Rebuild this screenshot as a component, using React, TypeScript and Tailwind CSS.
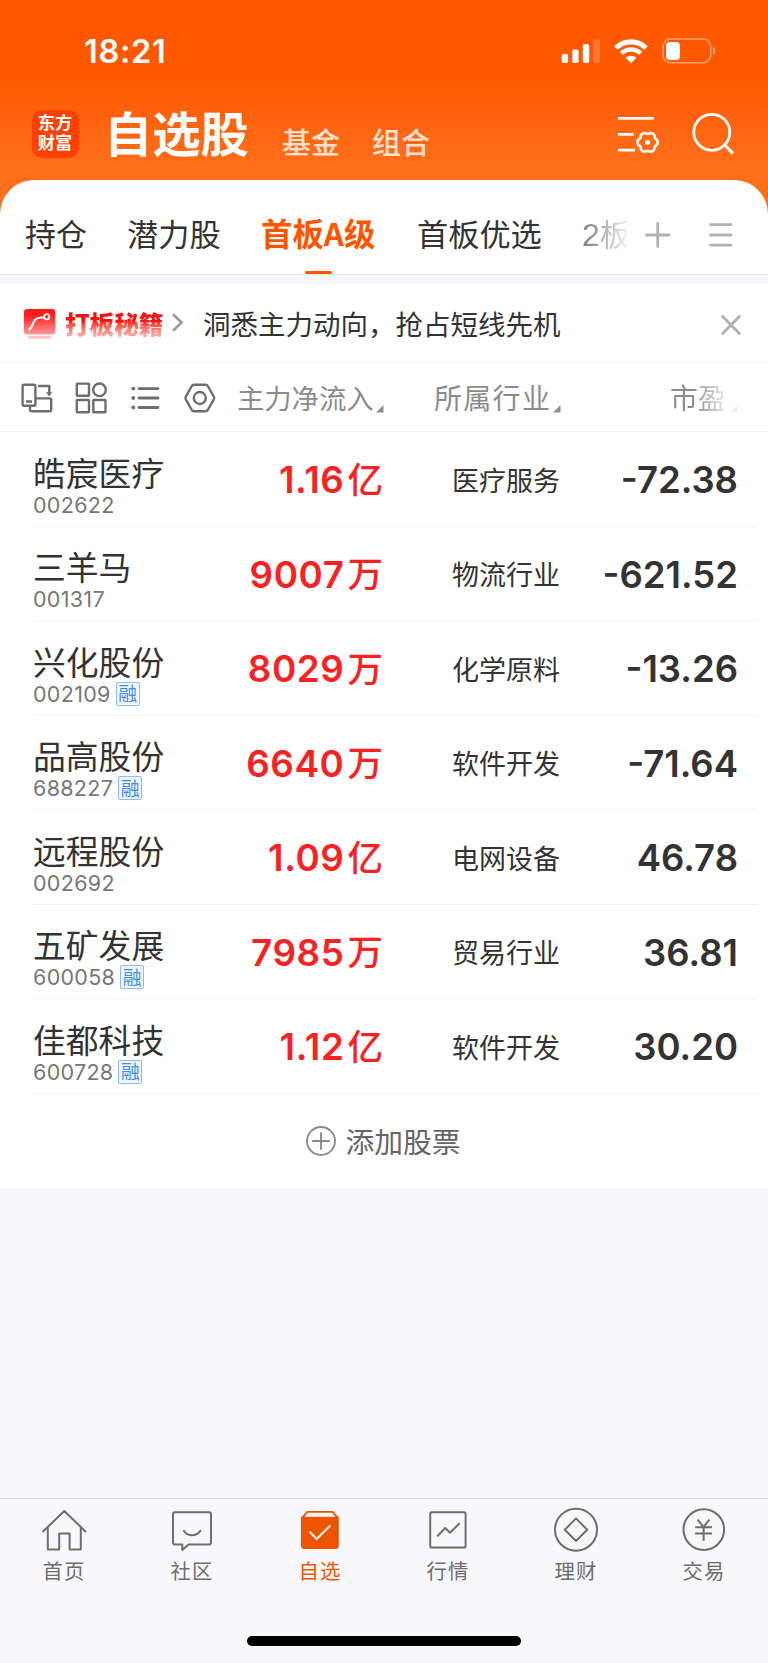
import React from "react";

const CJK = "font-['Noto_Sans_CJK_SC',sans-serif]";
const NUM = "font-['Inter',sans-serif]";

type Stock = {
  name: string;
  code: string;
  margin?: boolean;
  amount: string;
  unit: string;
  industry: string;
  pe: string;
};

const STOCKS: Stock[] = [
  { name: "皓宸医疗", code: "002622", amount: "1.16", unit: "亿", industry: "医疗服务", pe: "-72.38" },
  { name: "三羊马", code: "001317", amount: "9007", unit: "万", industry: "物流行业", pe: "-621.52" },
  { name: "兴化股份", code: "002109", margin: true, amount: "8029", unit: "万", industry: "化学原料", pe: "-13.26" },
  { name: "品高股份", code: "688227", margin: true, amount: "6640", unit: "万", industry: "软件开发", pe: "-71.64" },
  { name: "远程股份", code: "002692", amount: "1.09", unit: "亿", industry: "电网设备", pe: "46.78" },
  { name: "五矿发展", code: "600058", margin: true, amount: "7985", unit: "万", industry: "贸易行业", pe: "36.81" },
  { name: "佳都科技", code: "600728", margin: true, amount: "1.12", unit: "亿", industry: "软件开发", pe: "30.20" },
];

const gearPath = (cx: number, cy: number) => {
  const pts: string[] = [];
  for (let i = 0; i < 72; i++) {
    const t = (i / 72) * Math.PI * 2;
    const r = 9.4 + 0.8 * Math.cos(6 * t) - 0.15 * Math.cos(12 * t);
    pts.push(`${(cx + r * Math.cos(t)).toFixed(2)} ${(cy + r * Math.sin(t)).toFixed(2)}`);
  }
  return `M${pts.join("L")}Z`;
};

function StatusBar() {
  return (
    <div className="flex h-[100px] justify-between pl-[84px] pr-[50px]">
      <div className={`${NUM} pt-[35px] text-[32.5px] leading-[33px] font-semibold tracking-[0.7px]`}>18:21</div>
      <svg className="mt-[34px] h-[34px] w-[160px]" viewBox="558 34 160 34" fill="#fff">
        <rect x="561.7" y="54" width="6.4" height="9" rx="1.8" />
        <rect x="572.2" y="49.5" width="6.4" height="13.5" rx="1.8" />
        <rect x="582.8" y="44" width="6.4" height="19" rx="1.8" />
        <rect x="593.3" y="39" width="6.6" height="24" rx="1.8" opacity=".22" />
        <path d="M616 48A21.2 21.2 0 0 1 646 48" fill="none" stroke="#fff" strokeWidth="5.2" />
        <path d="M621.4 53.4A13.6 13.6 0 0 1 640.6 53.4" fill="none" stroke="#fff" strokeWidth="4.6" />
        <path d="M631 63.2L625.6 57.8A7.8 7.8 0 0 1 636.4 57.8Z" />
        <rect x="663.1" y="39" width="47.6" height="23.8" rx="7.5" fill="none" stroke="#fff" strokeWidth="1.5" opacity=".45" />
        <rect x="666" y="42" width="14" height="18" rx="4" />
        <path d="M713 46.8A5 5 0 0 1 713 55.2Z" opacity=".5" />
      </svg>
    </div>
  );
}

function TitleBar() {
  return (
    <div className={`flex h-[80px] pl-8 ${CJK}`}>
      <div className="mt-[10px] flex h-12 w-[47px] flex-col items-center rounded-[10px] bg-[#ff4000] pt-[2px] pr-[1px] text-[17.2px] leading-[20px] font-bold">
        <span>东方</span>
        <span>财富</span>
      </div>
      <h1 className="ml-[25px] mt-[5px] w-[154px] whitespace-nowrap text-[48.3px] leading-[52px] font-bold">自选股</h1>
      <span className="ml-[24px] mt-[23px] w-[90px] text-[29px] leading-[36px] font-medium text-white/80">基金</span>
      <span className="mt-[23px] text-[29px] leading-[36px] font-medium text-white/80">组合</span>
      <svg className="mt-[10px] ml-auto mr-[30px] h-[48px] w-[124px]" viewBox="614 110 124 48" fill="none" stroke="#fff" strokeWidth="2.8">
        <path d="M618 118.4H653.8M618 134.4H634M618 150.2H635" />
        <path d={gearPath(647.6, 142.3)} strokeWidth="2.6" />
        <circle cx="647.6" cy="142.3" r="2.5" fill="#fff" stroke="none" />
        <circle cx="711.8" cy="132.3" r="18" />
        <path d="M724.6 144.8L733 153.6" strokeWidth="3" />
      </svg>
    </div>
  );
}

function Tabs() {
  return (
    <div className={`flex h-[95px] rounded-t-[34px] border-b border-[#e6e6e8] bg-white pl-[25px] pt-[33.5px] text-[31px] leading-[40px] text-[#333] ${CJK}`}>
      <span className="w-[102px]">持仓</span>
      <span className="w-[134px] text-[31.2px]">潜力股</span>
      <div className="flex w-[156px] flex-col">
        <span className="whitespace-nowrap text-[31.4px] font-bold text-[#ff5500]">首板A级</span>
        <span className="mt-[17.5px] ml-[44px] h-[4px] w-[27px] rounded-[1.5px] bg-[#ff5500]" />
      </div>
      <span className="w-[165px] text-[31.2px]">首板优选</span>
      <span className="w-[45px] overflow-hidden whitespace-nowrap [mask-image:linear-gradient(to_right,rgba(0,0,0,.65),rgba(0,0,0,.08))]">
        <span className="font-['Liberation_Sans',sans-serif] text-[32px]">2</span>板
      </span>
      <svg className="ml-[14px] mt-[5.5px] h-[32px] w-[96px]" viewBox="641 219 96 32" fill="none" stroke="#b2b2b2" strokeWidth="2.8" strokeLinecap="round">
        <path d="M646.5 235H669M657.7 223.5V246.5" />
        <path d="M710.5 224.6H731M710.5 235H731M710.5 245.2H731" />
      </svg>
    </div>
  );
}

function Promo() {
  return (
    <div className={`flex h-[79px] items-center border-b-[1.5px] border-[#f2f2f4] bg-white pl-[23px] pr-[26px] ${CJK}`}>
      <svg className="mt-[2px] h-[34px] w-[34px]" viewBox="23 307 34 34">
        <defs>
          <linearGradient id="promo" x1="0" y1="0" x2="0" y2="1">
            <stop offset="0.25" stopColor="#ff1c1c" />
            <stop offset="1" stopColor="#ff9a9a" />
          </linearGradient>
        </defs>
        <rect x="24" y="309" width="31.3" height="25.5" rx="3" fill="url(#promo)" />
        <path d="M28 336H51.3V338.8H29Z" fill="#ffc4c4" />
        <path d="M29 329.5C34 328 31.5 318 40 317.8L44 317.2" fill="none" stroke="#fff" strokeWidth="2" strokeLinecap="round" />
        <circle cx="46.8" cy="316.8" r="2.6" fill="none" stroke="#fff" strokeWidth="1.8" />
      </svg>
      <span className="ml-[8px] w-[99px] whitespace-nowrap bg-linear-to-b from-[#ff1010] from-45% to-[#ffa4a4] to-85% bg-clip-text text-[24.6px] leading-[34px] font-black text-transparent">打板秘籍</span>
      <svg className="ml-[7px] h-[22px] w-[14px]" viewBox="171 314 14 22" fill="none" stroke="#999" strokeWidth="2.6">
        <path d="M173 316.3L181.6 324.6L173 332.8" />
      </svg>
      <span className="ml-[18px] text-[27.5px] leading-[34px] text-[#333]">洞悉主力动向，抢占短线先机</span>
      <svg className="mt-[3px] ml-auto h-[22px] w-[22px]" viewBox="720 313.6 22 22" fill="none" stroke="#b0b0b0" strokeWidth="2.8" strokeLinecap="round">
        <path d="M722.6 316.2L739.4 333M739.4 316.2L722.6 333" />
      </svg>
    </div>
  );
}

function SortMark() {
  return (
    <svg className="mt-[41.5px] ml-[2px] h-[8px] w-[8px]" viewBox="0 0 8 8">
      <path d="M7.5 0V7.5H0Z" fill="#8e8e96" />
    </svg>
  );
}

function Columns() {
  return (
    <div className={`flex h-[69px] border-b-[1.5px] border-[#f2f2f4] bg-white pl-[20px] text-[27.3px] leading-[34px] text-[#8c8c8c] ${CJK}`}>
      <svg className="mt-[17px] h-[36px] w-[198px]" viewBox="20 380 198 36" fill="none" stroke="#6e6e6e" strokeWidth="2.4" strokeLinejoin="round">
        <rect x="22.6" y="384.8" width="12.8" height="21" rx="1.5" />
        <path d="M26 401.5H32M38 386H49.3V393" />
        <path d="M46 392.3H52.4L49.2 396.6Z" fill="#6e6e6e" stroke="none" />
        <path d="M30 406V409.5Q30 411.3 31.8 411.3H49.6Q51.2 411.3 51.2 409.5V400Q51.2 398.4 49.6 398.4H36" />
        <rect x="76.8" y="383.6" width="12.2" height="12.2" rx=".5" />
        <circle cx="99.5" cy="389.8" r="6.3" />
        <rect x="76.8" y="400" width="12.2" height="12.2" rx=".5" />
        <rect x="93.3" y="400" width="12.2" height="12.2" rx=".5" />
        <path d="M139 388.6H158M139 398H158M139 407.5H158" strokeWidth="2.9" strokeLinecap="round" />
        <g fill="#6e6e6e" stroke="none">
          <circle cx="133.3" cy="388.6" r="1.9" />
          <circle cx="133.3" cy="398" r="1.9" />
          <circle cx="133.3" cy="407.5" r="1.9" />
        </g>
        <path d="M194 384.8H205.6Q207 384.8 207.8 386L213.8 396.6Q214.6 398 213.8 399.4L207.8 410Q207 411.2 205.6 411.2H194Q192.6 411.2 191.8 410L185.8 399.4Q185 398 185.8 396.6L191.8 386Q192.6 384.8 194 384.8Z" />
        <circle cx="199.8" cy="398" r="6" />
      </svg>
      <span className="ml-[19px] mt-[16.5px] w-[137px] whitespace-nowrap">主力净流入</span>
      <div className="flex w-[60px]"><SortMark /></div>
      <span className="mt-[16.5px] w-[117px] whitespace-nowrap text-[28px] tracking-[1.3px]">所属行业</span>
      <div className="flex w-[119px]"><SortMark /></div>
      <div className="flex w-[72px] [mask-image:linear-gradient(to_right,#000_30%,rgba(0,0,0,.15)_80%)]">
        <span className="mt-[16.5px] whitespace-nowrap text-[28px]">市盈</span>
        <div className="ml-[2px]"><SortMark /></div>
      </div>
    </div>
  );
}

function Row({ s }: { s: Stock }) {
  return (
    <div className="ml-[33px] mr-[10px] flex h-[94.5px] border-b-[1.5px] border-[#f2f2f4]">
      <div className="w-[190px] pt-[19.5px]">
        <div className={`${CJK} text-[32.8px] leading-[40px] text-[#333]`}>{s.name}</div>
        <div className="mt-[1px] flex h-[24px] items-center">
          <span className={`${NUM} text-[21.5px] leading-[24px] tracking-[0.3px] text-[#777]`}>{s.code}</span>
          {s.margin && (
            <span className={`${CJK} ml-[5px] flex h-[24px] w-[24px] items-center justify-center rounded-[2px] border-[1.5px] border-[#8dbcf2] bg-[#eff6fe] pb-[1px] text-[18.8px] leading-[20px] text-[#3f8de8]`}>融</span>
          )}
        </div>
      </div>
      <div className="flex w-[160px] justify-end pt-[25px] text-[#f82222]">
        <span className={`${NUM} text-[36.8px] leading-[46px] font-semibold tracking-[0.6px]`}>{s.amount}</span>
        <span className={`${CJK} -mt-[2.5px] ml-[3px] text-[35.5px] leading-[46px] font-medium`}>{s.unit}</span>
      </div>
      <div className={`${CJK} w-[178px] pr-[1px] pt-[30.5px] text-right text-[27px] leading-[34px] text-[#333]`}>{s.industry}</div>
      <div className={`${NUM} flex-1 pr-[20px] pt-[25px] text-right text-[36.5px] leading-[46px] font-semibold text-[#333]`}>{s.pe}</div>
    </div>
  );
}

function NavItem({ label, x, active, children }: { label: string; x: number; active?: boolean; children: React.ReactNode }) {
  return (
    <div className={`flex flex-1 flex-col items-center ${active ? "text-[#ee5500]" : "text-[#6e6e6e]"}`}>
      <svg className="h-[56px] w-[128px]" viewBox={`${x} 1499 128 56`} fill="none" stroke="currentColor" strokeWidth="2" strokeLinejoin="round">
        {children}
      </svg>
      <span className={`${CJK} text-[20.4px] leading-[30px] tracking-[1px]`}>{label}</span>
    </div>
  );
}

function BottomNav() {
  return (
    <nav className="flex h-[165px] flex-col border-t border-[#dedee2] bg-[#f8f8fb]">
      <div className="flex h-[137px]">
        <NavItem label="首页" x={0}>
          <path d="M42.5 1532L64.3 1511L86 1532M47.8 1527.5V1549.6H59.2V1533.6H69.6V1549.6H80.8V1527.5" />
        </NavItem>
        <NavItem label="社区" x={128}>
          <path d="M175 1512.2H209Q211 1512.2 211 1514.2V1542.6Q211 1544.6 209 1544.6H188.5L182.3 1550V1544.6H175Q173 1544.6 173 1542.6V1514.2Q173 1512.2 175 1512.2Z" />
          <path d="M183.4 1530.2C188 1537 196 1537 201 1530.2" />
        </NavItem>
        <NavItem label="自选" x={256} active>
          <path d="M307 1511H333L338.8 1517.4V1545.5Q338.8 1549 335.3 1549H304.5Q301 1549 301 1545.5V1517.4Z" fill="#ee5500" stroke="none" />
          <path d="M307.8 1512.8H332.2L335.6 1516.8H304.4Z" fill="#fff" stroke="none" />
          <path d="M309.6 1531.6L316.6 1539L330.4 1525.4" stroke="#fff" />
        </NavItem>
        <NavItem label="行情" x={384}>
          <rect x="430.2" y="1512.3" width="35.4" height="35.3" rx="1.8" />
          <path d="M437.3 1536.2L445.2 1528L450 1532.8L459.6 1523.3" />
        </NavItem>
        <NavItem label="理财" x={512}>
          <circle cx="576" cy="1529.7" r="21" />
          <path d="M576 1518.4L587.2 1529.7L576 1541L564.8 1529.7Z" />
        </NavItem>
        <NavItem label="交易" x={640}>
          <circle cx="703.8" cy="1529.6" r="20.3" />
          <path d="M697.6 1519.6L703.6 1527L709.4 1519.6M695.2 1527.3H712M695.2 1533.5H712M703.6 1527V1540.7" />
        </NavItem>
      </div>
      <div className="mx-auto h-[10px] w-[274px] rounded-full bg-black" />
    </nav>
  );
}

export default function App() {
  return (
    <div className="flex h-[1663px] w-[768px] flex-col overflow-hidden bg-[#f6f7fa]">
      <header className="h-[224px] shrink-0 bg-linear-to-b from-[#ff5800] from-35% to-[#ff6f1a] to-75% text-white">
        <StatusBar />
        <TitleBar />
      </header>
      <div className="-mt-[44.5px]">
        <Tabs />
      </div>
      <div className="mt-[9.5px]">
        <Promo />
      </div>
      <Columns />
      <main className="h-[755.5px] bg-white">
        {STOCKS.map((s) => (
          <Row key={s.code} s={s} />
        ))}
        <div className={`flex h-[94px] items-center justify-center pr-[2px] text-[28.8px] leading-[36px] text-[#666] ${CJK}`}>
          <svg className="mr-[8px] h-[32px] w-[32px]" viewBox="0 0 32 32" fill="none" stroke="#8a8a92" strokeWidth="1.9">
            <circle cx="16" cy="16" r="14" />
            <path d="M7.2 16H24.8M16 7.2V24.8" />
          </svg>
          <span>添加股票</span>
        </div>
      </main>
      <div className="flex-1" />
      <BottomNav />
    </div>
  );
}
